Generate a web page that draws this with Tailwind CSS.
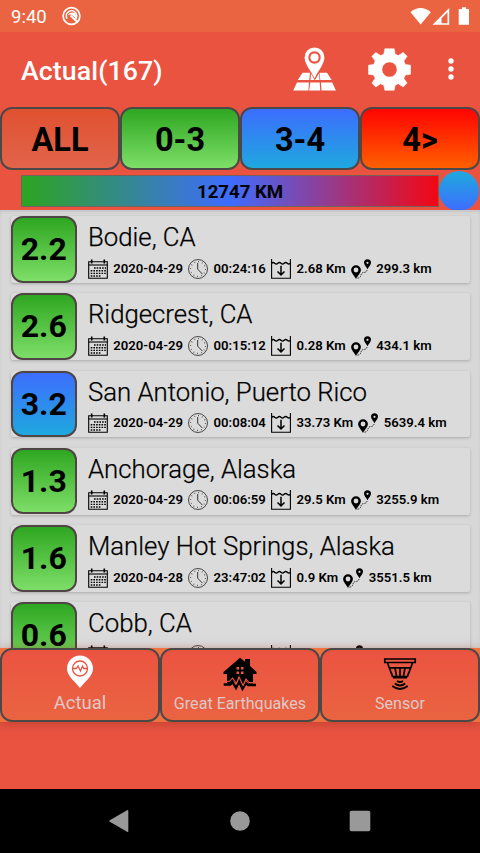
<!DOCTYPE html>
<html lang="en">
<head>
<meta charset="utf-8">
<title>Earthquakes</title>
<script src="https://cdn.jsdelivr.net/npm/@tailwindcss/browser@4"></script>
</head>
<body class="w-[480px] h-[853px] overflow-hidden bg-[#eb5341] font-[Roboto,sans-serif] text-black flex flex-col">
<svg class="hidden">
  <symbol id="cal" viewBox="0 0 20 20"><path d="M.7 2.8h18.6v16.5H.7z" fill="none" stroke="#000" stroke-width="1.1"/><path d="M.7 6h18.6" stroke="#000" stroke-width="1.1"/><path d="M3.7.5v4M16.3.5v4" stroke="#000" stroke-width="1.6"/><path d="M6 9h12M2.7 11.7h15.5M2.7 14.4h15.5M2.7 17h10" stroke="#000" stroke-width="1.4" stroke-dasharray="1.6 1.1"/></symbol>
  <symbol id="clock" viewBox="0 0 20 20"><circle cx="10" cy="10" r="9.5" fill="none" stroke="#222" stroke-width=".8"/><circle cx="10" cy="10" r="7.4" fill="none" stroke="#222" stroke-width="1.1" stroke-dasharray=".7 3.175"/><path d="M9.7 4v6.2l4.8 5" fill="none" stroke="#222" stroke-width=".9"/></symbol>
  <symbol id="depth" viewBox="0 0 20 20"><path d="M.6 0v19.3h18.8V0" fill="none" stroke="#000" stroke-width="1.1"/><path d="M.6 4.2q1.6-1.500 3.1 0 1.600 1.500 3.100 0 1.600-1.500 3.200 0 1.600 1.500 3.100 0 1.600-1.500 3.200 0 1.500 1.500 3.100 0" fill="none" stroke="#000" stroke-width="1.400"/><path d="M10 6.800v9M6.500 12.500l3.500 3.400 3.500-3.400" fill="none" stroke="#000" stroke-width="1.500"/></symbol>
  <symbol id="route" viewBox="0 0 20 20"><path fill-rule="evenodd" d="M5 6.200a4.900 4.900 0 0 1 4.900 4.900C9.900 14 6.500 17 5 20 3.500 17 .1 14 .1 11.100A4.900 4.900 0 0 1 5 6.200zM5 8.600a2.400 2.400 0 1 0 0 4.800 2.400 2.400 0 0 0 0-4.800z"/><path fill-rule="evenodd" d="M16.500.3A3.500 3.500 0 0 1 20 3.800C20 6 17.600 7.800 16.500 10.200 15.400 7.800 13 6 13 3.800A3.500 3.500 0 0 1 16.500.3zM16.500 2.700a1.100 1.100 0 1 0 0 2.200 1.100 1.100 0 0 0 0-2.200z"/><path d="M6.500 19.200q3-.4 3.500-3t3-2.700 3.300-3" fill="none" stroke="#000" stroke-width=".8" stroke-dasharray="1.500 .9"/></symbol>
</svg>

<div class="h-8 shrink-0 bg-[#ea6441] flex items-center text-white pl-[11px] pr-[10px]">
  <span class="text-[18.500px] leading-8 pt-[2px] w-[51px]">9:40</span>
  <svg class="w-5 h-5" viewBox="0 0 20 20"><circle cx="9.500" cy="10" r="8.400" fill="none" stroke="#fff" stroke-width="1.700"/><path d="M5 12.600A5.200 5.200 0 1 1 12.500 14.200" fill="none" stroke="#fff" stroke-width="1.600"/><path d="M5.200 9.400Q8 5.300 12 6.800q3 2 1.800 5.400L9.500 8.800q-2-.6-4.300.6z" fill="#fff"/><path d="M8.500 9.500l7.500 7" stroke="#fff" stroke-width="2"/></svg>
  <div class="grow"></div>
  <svg class="w-[60px] h-5" viewBox="0 0 60 20"><path d="M.5 6.200Q10.500-2.200 20.800 6.200L10.700 18.600z" fill="#fff"/><path fill-rule="evenodd" d="M22.500 18.700L39.200 2v16.700zM31.500 12.200v5h6V6.300z" fill="#fff"/><path d="M52 1.200h4v1.700h3v15.800H48.700V2.900H52z" fill="#fff"/></svg>
</div>

<div class="h-[75px] shrink-0 flex items-center pl-[21px] pr-[18px] text-white">
  <h1 class="text-[26.700px] font-medium tracking-[0.1px] pt-[3px] grow">Actual(167)</h1>
  <svg class="w-[43px] h-[44px] mr-[32px] -mt-[1px]" viewBox="0 0 43 44"><path fill="#fff" d="M9.500 25.800H17l-.8 7.200H4.800zM26.500 25.800h7.500l4.700 7.200H27.300zM4 35.500h12l-.6 8H.2zM17.300 35.500h9.400l.6 8H16.200zM27.900 35.500h11.300l3.700 8H28.600zM18 26.500l3.500 6.500h-4zM26 26.500L22 33h4.500z"/><path fill="#fff" fill-rule="evenodd" d="M21.500.5a9.800 9.800 0 0 1 9.900 9.900c0 7-6.400 13-9.900 21.100-3.500-8.100-9.900-14.100-9.900-21.100A9.800 9.800 0 0 1 21.500.5zM21.500 4.300a6.200 6.200 0 1 0 0 12.400 6.200 6.200 0 0 0 0-12.400z"/><circle cx="21.500" cy="10.500" r="4.100" fill="#fff"/></svg>
  <svg class="w-[43px] h-[43px] mr-[27.500px] -mt-[1px]" viewBox="0 0 44 44"><path fill="#fff" stroke="#fff" stroke-width=".6" stroke-linejoin="round" fill-rule="evenodd" d="M17.200.8h9.600l1 5.600 3.300 1.400 4.900-3.300 4 4-3.300 4.900 1.400 3.400 5.400.8v9.200l-5.400.9-1.400 3.400 3.300 4.800-4 4-4.900-3.300-3.300 1.400-1 5.200h-9.600l-1-5.200-3.300-1.400L8 39.900l-4-4 3.300-4.800-1.400-3.400-5.400-.9v-9.200l5.400-.8 1.400-3.400L4 8.500l4-4 4.900 3.300 3.300-1.400zM22 14.200a7.800 7.800 0 1 0 0 15.600 7.800 7.800 0 0 0 0-15.600z"/></svg>
  <svg class="w-6 h-6 -mr-[0.500px] -mt-[1px]" viewBox="0 0 24 24" fill="#fff"><circle cx="12" cy="4" r="2.700"/><circle cx="12" cy="12" r="2.700"/><circle cx="12" cy="20" r="2.700"/></svg>
</div>

<div class="h-[63px] shrink-0 grid grid-cols-4 grid-rows-[63px] text-[32.500px] font-bold text-center leading-[63px]">
  <div class="border-[2.500px] border-[#4c4848] rounded-[12px] bg-linear-to-b/srgb from-[#e0502f] to-[#e2654c] bg-origin-border">ALL</div>
  <div class="border-[2.500px] border-[#4c4848] rounded-[12px] bg-linear-to-b/srgb from-[#2ca51f] to-[#80e06a] bg-origin-border">0-3</div>
  <div class="border-[2.500px] border-[#4c4848] rounded-[12px] bg-linear-to-b/srgb from-[#3e6cff] to-[#1daadd] bg-origin-border">3-4</div>
  <div class="border-[2.500px] border-[#4c4848] rounded-[12px] bg-linear-to-b/srgb from-[#ff0000] to-[#ff6400] bg-origin-border">4&gt;</div>
</div>

<div class="h-[40px] shrink-0 flex items-center pl-[21px] pt-[1px]">
  <div class="relative w-[418px] h-[32px] border border-[#75615a] bg-linear-to-r/srgb from-[#2ca51f] via-[#3e6cff] to-[#f40612] bg-origin-border"><span class="absolute left-0 w-[436px] text-center text-[18.600px] font-bold leading-[32px]">12747 KM</span></div>
  <div class="w-10 h-10 rounded-full bg-linear-to-b/srgb from-[#1daadd] to-[#3e6cff] shrink-0"></div>
</div>

<main id="list" class="h-[438px] shrink-0 overflow-hidden bg-[#d8d8d8] shadow-[inset_0_2px_3px_#c5c5c5] pt-[6px] pl-[10.500px] pr-[10.500px] flex flex-col gap-[10.500px]"></main>

<nav class="h-[74px] shrink-0 grid grid-cols-3 bg-[#ef713e] text-[#dfc8c8] shadow-[0_2px_10px_#99302388]">
  <div class="border-[2.500px] border-[#4c4848] rounded-[12px] bg-linear-to-b/srgb from-[#eb5341] to-[#ea6441] flex flex-col items-center">
    <svg class="w-[28px] h-[34px] mt-[5px]" viewBox="0 0 28 34"><path fill="#fff" d="M14 .5a13 13 0 0 1 13 13c0 7-6 11-13 19.500C7 24.500 1 20.500 1 13.500a13 13 0 0 1 13-13z"/><circle cx="14" cy="13.500" r="7.500" fill="none" stroke="#eb5341" stroke-width="1.300"/><path d="M6.500 13.500h3.800l1.700-2.500 2.500 5 2-5 1.300 2.500h3.700" fill="none" stroke="#eb5341" stroke-width="1.300"/></svg>
    <span class="text-[18.500px] leading-[22px] mt-[3px]">Actual</span>
  </div>
  <div class="border-[2.500px] border-[#4c4848] rounded-[12px] bg-linear-to-b/srgb from-[#eb5341] to-[#ea6441] flex flex-col items-center">
    <svg class="w-[34px] h-[34px] mt-[7px]" viewBox="0 0 34 34"><path d="M17 .7l5 4V2h5v7l6.500 6v2H30v9.500h-4.500L23 23l-3.500 7-4-8-2.500 4.500-3-2.500-2 2.500H4V17H.5v-2z"/><path d="M.7 27.500h6.600l2.200-2.500 3.500 6 3-6.500 3.500 7.500 3.500-6 2 2h8" fill="none" stroke="#000" stroke-width="2.300"/><path d="M13.500 10h2.500v2.500h-2.500zM18 10h2.500v2.500H18zM13.500 14.500H16V17h-2.500zM18 14.500h2.500V17H18z" fill="#eb5b41"/><path d="M3 24.300h3.500L9.500 21l4 5.500L16 20l4 8.500L23 22l3 3.500h5" fill="none" stroke="#eb5b41" stroke-width="1.100"/></svg>
    <span class="text-[16.100px] leading-[22px] mt-[2px] whitespace-nowrap">Great Earthquakes</span>
  </div>
  <div class="border-[2.500px] border-[#4c4848] rounded-[12px] bg-linear-to-b/srgb from-[#eb5341] to-[#ea6441] flex flex-col items-center">
    <svg class="w-[34px] h-[34px] mt-[7px]" viewBox="0 0 34 34" fill="none" stroke="#000" stroke-width="1.700"><path d="M1.800 2h30.400v3.500H1.800zM4.500 6l5 13.500h15L29.500 6M6 10.800h22M12 11l1.500 8M17 11v8M22 11l-1.500 8M8.500 16l1 3.500M25.500 16l-1 3.500"/><path d="M10 20.500h14" stroke-width="2"/><path d="M14 24q3 2 6 0M11.800 26.500q5.200 4 10.400 0M9.300 29q7.700 6 15.400 0" stroke-width="1.800"/></svg>
    <span class="text-[16.100px] leading-[22px] mt-[2px]">Sensor</span>
  </div>
</nav>

<div class="grow"></div>
<footer class="h-16 shrink-0 bg-black flex items-center justify-center">
  <svg class="w-[262px] h-[24px]" viewBox="0 0 262 24" fill="#999"><path d="M.8 11.200L18.500 1q.8-.3.800.7v20.600q0 1-.8.700L.8 12.800q-1-.8 0-1.600z"/><circle cx="131" cy="12" r="9.800"/><rect x="240.700" y="1.700" width="20.600" height="20.600" rx="1.800"/></svg>
</footer>

<script>
const green = 'from-[#2ca51f] to-[#80e06a]', blue = 'from-[#3e6cff] to-[#1daadd]';
const quakes = [
  ['2.2', 'Bodie, CA', '2020-04-29', '00:24:16', '2.68 Km', '299.3 km'],
  ['2.6', 'Ridgecrest, CA', '2020-04-29', '00:15:12', '0.28 Km', '434.1 km'],
  ['3.2', 'San Antonio, Puerto Rico', '2020-04-29', '00:08:04', '33.73 Km', '5639.4 km'],
  ['1.3', 'Anchorage, Alaska', '2020-04-29', '00:06:59', '29.5 Km', '3255.9 km'],
  ['1.6', 'Manley Hot Springs, Alaska', '2020-04-28', '23:47:02', '0.9 Km', '3551.5 km'],
  ['0.6', 'Cobb, CA', '2020-04-28', '23:41:27', '1.7 Km', '82.6 km']
];
const icons = ['cal', 'clock', 'depth', 'route'];
document.getElementById('list').innerHTML = quakes.map(q => `
<article class="h-[66.800px] shrink-0 flex bg-[#dbdbdb] rounded-[2px] shadow-[0_1px_3px_#aaa]">
  <div class="w-[66.500px] h-[66.500px] shrink-0 border-[2.500px] border-[#4f4545] rounded-[12px] bg-linear-to-b/srgb bg-origin-border ${+q[0] >= 3 ? blue : green} text-[32px] font-bold text-center leading-[63px]">${q[0]}</div>
  <div class="pl-[11px] flex flex-col">
    <h2 class="text-[25.750px] font-light [-webkit-text-stroke:0.250px_#000] leading-[30px] mt-[6px] whitespace-nowrap">${q[1]}</h2>
    <div class="flex items-center gap-[5.300px] mt-[6.500px] text-[13.150px] leading-5 font-semibold whitespace-nowrap">${icons.map((n, i) => `<svg class="w-5 h-5 shrink-0"><use href="#${n}"/></svg><span>${q[i + 2]}</span>`).join('')}</div>
  </div>
</article>`).join('');
</script>
</body>
</html>
